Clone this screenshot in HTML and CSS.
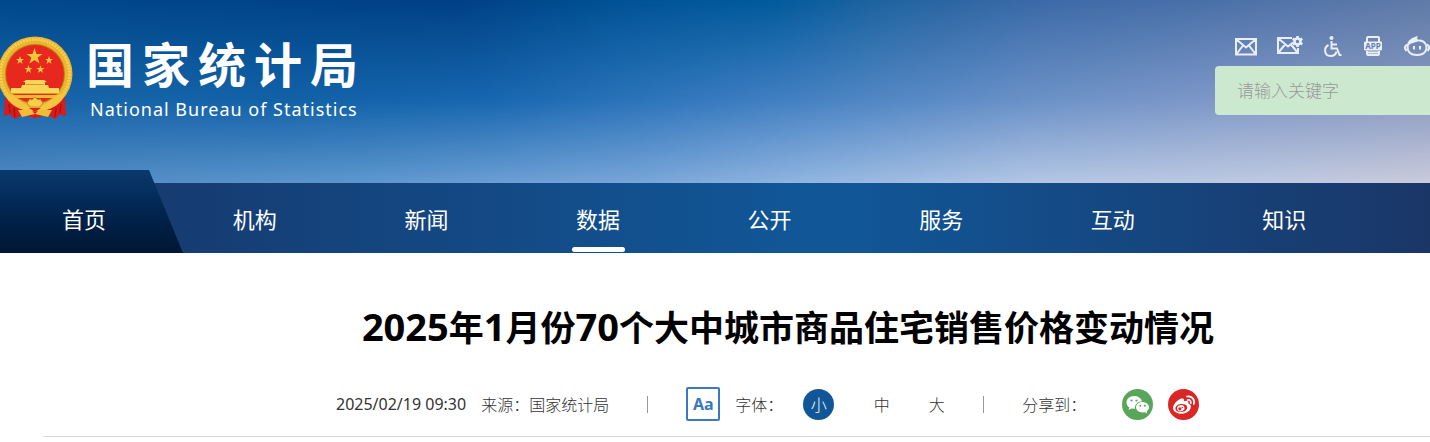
FILE: index.html
```html
<!DOCTYPE html>
<html lang="zh-CN">
<head>
    <meta charset="UTF-8">
    <title>2025年1月份70个大中城市商品住宅销售价格变动情况 - 国家统计局</title>
    <link rel="stylesheet" href="styles.css">
</head>
<body>
    <header class="header">
        <a class="logo" href="#">
            <svg class="emblem" viewBox="0 0 74 84" aria-hidden="true">
                <path d="M6 58 L4 80 L10 78 L15 83 L22 79 L35 82 L48 79 L55 83 L60 78 L65 80 L64 58 Z" fill="#d81b1c"/>
                <circle cx="35" cy="38" r="37.500" fill="#e9b52e"/>
                <circle cx="35" cy="38" r="34.500" fill="none" stroke="#f6d052" stroke-width="3" stroke-dasharray="2 1"/>
                <circle cx="35" cy="38" r="30" fill="#b98218"/>
                <circle cx="35" cy="38" r="29" fill="#e8281f"/>
                <g fill="#f3c63c">
                    <path d="M34.500 12 L36.500 18 L42.500 18 L37.700 21.600 L39.500 27.500 L34.500 24 L29.500 27.500 L31.300 21.600 L26.500 18 L32.500 18 Z"/>
                    <path d="M20 20 L21 23 L24 23 L21.600 24.800 L22.500 28 L20 26 L17.500 28 L18.400 24.800 L16 23 L19 23 Z"/>
                    <path d="M49 20 L50 23 L53 23 L50.600 24.800 L51.500 28 L49 26 L46.500 28 L47.400 24.800 L45 23 L48 23 Z"/>
                    <path d="M28.500 29 L29.500 32 L32.500 32 L30.100 33.800 L31 37 L28.500 35 L26 37 L26.900 33.800 L24.500 32 L27.500 32 Z"/>
                    <path d="M40.500 29 L41.500 32 L44.500 32 L42.100 33.800 L43 37 L40.500 35 L38 37 L38.900 33.800 L36.500 32 L39.500 32 Z"/>
                </g>
                <path d="M26 44 H44 L47 46 H45 V49 H48 L49 52 H59 V57 H11 V52 H21 L22 49 H25 V46 H23 Z" fill="#fbd45a"/>
                <path d="M26 48.500 H44 M12 57.500 H58" stroke="#d99a21" stroke-width="1"/>
                <path d="M11 59 H59 L57 62 H13 Z" fill="#f0ba37"/>
                <path d="M5 56 C17 60 22 68 29 70 L41 70 C48 68 53 60 65 56 C63 68 52 73 42 75 L28 75 C18 73 7 68 5 56 Z" fill="#f4c541"/>
                <path d="M5 61 C10 70 18 74 28 76 L21 78 L15 83 L10 78 L4 80 Z M65 61 C60 70 52 74 42 76 L49 78 L55 83 L60 78 L66 80 Z" fill="#d81b1c"/>
                <path d="M9 68 L10 77 M14 72 L15 81 M56 72 L55 81 M61 68 L60 77" stroke="#a31214" stroke-width="1.200"/>
                <path d="M27 67 L30 63 L32 64 L35 61 L38 64 L40 63 L43 67 L40 71 H30 Z" fill="#f7ce4b" stroke="#ca8c1c" stroke-width="1"/>
                <path d="M18 74 L31 74 L35 78 L39 74 L52 74 L48 81 L35 78 L22 81 Z" fill="#f1bd34"/>
                <path d="M29 72 H41 L35 76 Z" fill="#dd201e"/>
            </svg>
            <span class="logo-text">
                <span class="logo-cn">国家统计局</span>
                <span class="logo-en">National Bureau of Statistics</span>
            </span>
        </a>

        <div class="header-right">
            <div class="tools">
                <a href="#" aria-label="邮箱">
                    <svg width="22" height="22" viewBox="0 0 22 22"><path d="M1 3 H21 V18.500 H1 Z M1.500 3.500 L11 11.500 L20.500 3.500 M1.500 18 L8 9.500 M20.500 18 L14 9.500"/></svg>
                </a>
                <a href="#" aria-label="邮件订阅">
                    <svg width="26" height="22" viewBox="0 0 26 22"><path d="M15 2 H1 V17 H21 V12 M1.500 2.500 L11 10.500 L16 6.500 M1.500 16.500 L8 8.500 M20.500 16.500 L14 8.500"/><circle cx="20.500" cy="5.500" r="3" stroke-width="2.600"/><path d="M20.500 0 V2 M20.500 9 V11 M15.700 2.700 L17.500 3.800 M23.500 7.200 L25.300 8.300 M25.300 2.700 L23.500 3.800 M17.500 7.200 L15.700 8.300" stroke-width="2.600"/></svg>
                </a>
                <a href="#" aria-label="无障碍">
                    <svg width="20" height="22" viewBox="0 0 20 22"><circle cx="8.500" cy="2" r="2" class="fill"/><path d="M8.500 5 V12.500 H14 L16.500 19 H18.500 M8.500 8.500 H14 M5.500 9 C0 12 1.500 20 7.500 20 C11 20 13 18 13.500 15.500" stroke-width="2"/></svg>
                </a>
                <a href="#" aria-label="APP">
                    <svg width="20" height="22" viewBox="0 0 20 22"><path d="M4 6 V2 Q4 1 5 1 H15 Q16 1 16 2 V6 M4 15 V18 Q4 19 5 19 H15 Q16 19 16 18 V15 M4 16.500 H16"/><rect x="1" y="5.500" width="18" height="9" rx="1" class="fill"/><text x="10" y="13" text-anchor="middle" class="app-text">APP</text></svg>
                </a>
                <a href="#" aria-label="智能问答">
                    <svg width="27" height="22" viewBox="0 0 27 22"><path d="M5 9 C3.500 14 6 19 14 19 C22 19 24.500 14 23 9 C22 6 19 4.500 15.500 4.500 M4 8.500 Q0 11 3.500 15 M24 8.500 Q28 11 24.500 15" stroke-width="2"/><path d="M4 10 C4 4 10 1 15 0 C13.500 2 14 4 17 4 C14 7 9 6 6 9 Z" class="fill"/><path d="M11 10 V13.500 M17 10 V13.500" stroke-width="2"/></svg>
                </a>
            </div>
            <form class="search">
                <input type="text" class="search-input" aria-label="请输入关键字" placeholder="请输入关键字">
            </form>
        </div>
    </header>

    <nav class="nav">
        <a class="nav-item home" href="#">首页</a>
        <a class="nav-item" href="#">机构</a>
        <a class="nav-item" href="#">新闻</a>
        <a class="nav-item active" href="#">数据</a>
        <a class="nav-item" href="#">公开</a>
        <a class="nav-item" href="#">服务</a>
        <a class="nav-item" href="#">互动</a>
        <a class="nav-item" href="#">知识</a>
    </nav>

    <main class="main">
        <article class="article">
            <h1 class="title"><span class="num">2025</span>年<span class="num">1</span>月份<span class="num">70</span>个大中城市商品住宅销售价格变动情况</h1>
            <div class="meta">
                <time class="date">2025/02/19 09:30</time>
                <span class="source">来源：国家统计局</span>
                <span class="divider"></span>
                <span class="font-icon">Aa</span>
                <span class="font-label">字体：</span>
                <div class="font-sizes">
                    <button type="button" class="size-btn active">小</button>
                    <button type="button" class="size-btn">中</button>
                    <button type="button" class="size-btn">大</button>
                </div>
                <span class="divider"></span>
                <span class="share-label">分享到：</span>
                <div class="share">
                    <a href="#" aria-label="微信">
                        <svg width="31" height="31" viewBox="0 0 31 31">
                            <circle cx="15.500" cy="15.500" r="15.500" fill="#57a65a"/>
                            <path d="M12 7 C7.500 7 4.500 10 4.500 13.500 C4.500 15.500 5.500 17.200 7.300 18.400 L6.500 21 L9.500 19.500 L13 19.800 C12.500 15.500 16 12.500 20 12.300 C19 9 16 7 12 7 Z" fill="#fff"/>
                            <path d="M20.500 13 C16.800 13 14 15.300 14 18.300 C14 21.300 16.800 23.500 20.500 23.500 L23 23.200 L25.300 24.500 L24.700 22.300 C26.200 21.300 27 20 27 18.300 C27 15.300 24.200 13 20.500 13 Z" fill="#fff"/>
                            <g fill="#57a65a"><circle cx="9.500" cy="11.500" r="1.100"/><circle cx="14.500" cy="11.500" r="1.100"/><circle cx="18.300" cy="16.800" r="1"/><circle cx="22.800" cy="16.800" r="1"/></g>
                        </svg>
                    </a>
                    <a href="#" aria-label="微博">
                        <svg width="31" height="31" viewBox="0 0 31 31">
                            <circle cx="15.500" cy="15.500" r="15.500" fill="#d92626"/>
                            <path d="M13.500 9.500 C15.500 9 16.500 10.500 16 12.300 C18.500 11.300 21 11.500 20.300 14.500 C22.500 15 23.500 17 22.500 19.500 C21 23 17 25 12.500 24.700 C8 24.400 5 22 5 19 C5 15.500 9.500 10.500 13.500 9.500 Z" fill="#fff"/>
                            <ellipse cx="13.300" cy="19" rx="6" ry="4" fill="#d92626" transform="rotate(-8 13.300 19)"/>
                            <ellipse cx="12.800" cy="19.300" rx="3.700" ry="3.100" fill="#fff" transform="rotate(-15 12.800 19.300)"/>
                            <circle cx="11.900" cy="19.800" r="1.600" fill="#d92626"/>
                            <circle cx="14.300" cy="18.500" r="0.700" fill="#d92626"/>
                            <path d="M19 7.500 C23.500 6.500 27.200 10.500 25.800 15 M19.700 11 C22 10.500 23.300 12.300 22.700 14.200" fill="none" stroke="#fff" stroke-width="1.700" stroke-linecap="round"/>
                        </svg>
                    </a>
                </div>
            </div>
        </article>
    </main>
</body>
</html>
```
FILE: styles.css
```css
* {
    box-sizing: border-box;
}

body {
    margin: 0;
    background: #fff;
    color: #333;
    font-family: "Noto Sans", "Noto Sans CJK SC", sans-serif;
    font-size: 16px;
    overflow-x: hidden;
}

a {
    color: inherit;
    text-decoration: none;
}

/* Header: three rows of sky colour blended from top to bottom */
.header {
    position: relative;
    display: flex;
    justify-content: space-between;
    align-items: flex-start;
    min-height: 183px;
    padding-top: 36px;
    overflow: hidden;
    background: linear-gradient(90deg, #1a66aa 0%, #1262a8 20%, #1867b0 34%, #3177bd 47%, #4a84c4 58%, #6b92c8 72%, #8099c8 86%, #8d9cc2 100%);
}

.header::before,
.header::after {
    content: '';
    position: absolute;
    inset: 0;
}

.header::before {
    background: linear-gradient(90deg, #00488c 0%, #004084 32%, #005296 44%, #005a9c 54%, #1c629f 61%, #3a69a6 72%, #4a70a8 85%, #5f7aa8 100%);
    mask-image: linear-gradient(180deg, #000 0%, transparent 55%);
}

.header::after {
    background: linear-gradient(90deg, #5189c2 0%, #5e97ce 25%, #79a6d8 45%, #93b6e0 57%, #b3c6e4 72%, #bec9e0 88%, #c9cbdc 100%);
    mask-image: linear-gradient(180deg, transparent 55%, #000 100%);
}

.logo,
.header-right {
    position: relative;
    z-index: 1;
}

.logo {
    display: flex;
    color: #fff;
}

.emblem {
    width: 74px;
    height: 84px;
}

.logo-text {
    display: flex;
    flex-direction: column;
    padding-left: 12px;
}

.logo-cn {
    font-family: "Liberation Sans", "Noto Sans CJK SC", sans-serif;
    font-size: 48px;
    font-weight: 700;
    line-height: 62px;
    letter-spacing: 8px;
}

.logo-en {
    padding-left: 4px;
    font-size: 18px;
    line-height: 22px;
    letter-spacing: 1px;
}

.header-right {
    flex: 0 0 215px;
    min-width: 0;
}

.tools {
    display: flex;
    gap: 20px;
    width: 240px;
    height: 30px;
    padding-left: 20px;
}

.tools svg {
    display: block;
    fill: none;
    stroke: #e9eff8;
    stroke-width: 2;
}

.tools .fill {
    fill: #e9eff8;
    stroke: none;
}

.tools .app-text {
    fill: #6680b0;
    stroke: none;
    font-size: 8px;
    font-weight: 700;
}

.search-input {
    display: block;
    width: 300px;
    height: 49px;
    padding: 0 22px 3px;
    border: none;
    border-radius: 4px;
    background: #cce8cf;
    color: #333;
    font-family: "Noto Sans CJK SC", sans-serif;
    font-size: 17px;
    font-weight: 300;
}

.search-input::placeholder {
    color: #999;
    opacity: 1;
}

/* Navigation */
.nav {
    display: flex;
    height: 70px;
    background: linear-gradient(90deg, #163a70 0%, #163c72 12%, #115697 55%, #115697 60%, #1a3667 100%);
}

.nav-item {
    position: relative;
    flex: 0 0 12%;
    color: #fff;
    font-family: "Noto Sans CJK SC", sans-serif;
    font-size: 22px;
    line-height: 70px;
    text-align: center;
}

.nav-item.home {
    flex-basis: 183px;
    margin: -13px -14px 0 0;
    padding: 13px 15px 0 0;
    background: linear-gradient(180deg, #0a3a6d 0%, #032b59 35%, #001c40 75%, #001735 100%);
    clip-path: polygon(0 0, 149px 0, 100% 100%, 0 100%);
}

.nav-item.active::after {
    content: '';
    position: absolute;
    bottom: 1px;
    left: 50%;
    width: 53px;
    height: 5px;
    margin-left: -26px;
    border-radius: 3px;
    background: #fff;
}

/* Article */
.main {
    overflow: hidden;
}

.article {
    margin: 0 -103px 0 43px;
    padding-top: 48px;
    border-bottom: 1px solid #d8d8d8;
}

.title {
    margin: 0;
    color: #000;
    font-size: 35px;
    font-weight: 700;
    line-height: 54px;
    text-align: center;
}

.title .num {
    font-size: 38px;
    line-height: 1;
}

.meta {
    display: flex;
    align-items: center;
    height: 34px;
    margin: 32px 0 15px;
    padding-left: 293px;
}

.source,
.font-label,
.share-label {
    font-weight: 300;
}

.source {
    margin-left: 15px;
}

.divider {
    width: 1px;
    height: 17px;
    margin: 0 38px;
    background: #999;
}

.font-icon {
    width: 34px;
    height: 34px;
    margin-right: 15px;
    border: 2px solid #3c78c0;
    border-radius: 2px;
    color: #3c78c0;
    font-weight: 700;
    line-height: 30px;
    text-align: center;
}

.font-sizes {
    display: flex;
    gap: 24px;
    margin-left: 20px;
}

.size-btn {
    width: 31px;
    height: 31px;
    padding: 0;
    border: none;
    border-radius: 50%;
    background: none;
    color: #333;
    font-family: inherit;
    font-size: 16px;
    font-weight: 300;
    cursor: pointer;
}

.size-btn.active {
    margin-right: 8px;
    background: #115697;
    color: #fff;
}

.font-sizes + .divider {
    margin-left: 31px;
}

.share {
    display: flex;
    gap: 15px;
    margin-left: 36px;
}

.share svg {
    display: block;
}
```
